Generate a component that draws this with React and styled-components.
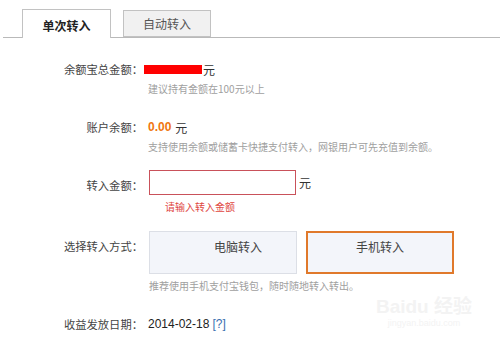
import React from 'react';
import styled, { createGlobalStyle } from 'styled-components';

const GlobalStyle = createGlobalStyle`
  html, body {
    margin: 0;
    padding: 0;
    background: #fff;
  }
  body {
    font-family: "Liberation Sans", "Noto Sans CJK SC", sans-serif;
    color: #333;
  }
`;

const Page = styled.div`
  position: relative;
  width: 500px;
  height: 341px;
  overflow: hidden;
  background: #fff;
`;

const TabBar = styled.div`
  display: flex;
  align-items: flex-end;
  height: 38px;
  margin-left: 3px;
  padding-left: 19px;
  border-bottom: 1px solid #b9b9b9;
  box-sizing: border-box;
`;

const Tab = styled.div`
  display: flex;
  align-items: center;
  justify-content: center;
  box-sizing: border-box;
  width: ${(p) => (p.$active ? '89px' : '88px')};
  height: ${(p) => (p.$active ? '29px' : '27px')};
  margin-left: ${(p) => (p.$active ? '0' : '12px')};
  margin-bottom: ${(p) => (p.$active ? '-1px' : '0')};
  border: 1px solid #c2c2c2;
  border-bottom: ${(p) => (p.$active ? 'none' : '1px solid #c2c2c2')};
  background: ${(p) => (p.$active ? '#fff' : '#f1f1f1')};
  color: ${(p) => (p.$active ? '#222' : '#555')};
  font-family: "Noto Sans CJK SC", sans-serif;
  font-size: 12px;
  font-weight: ${(p) => (p.$active ? 'bold' : 'normal')};
  padding-top: ${(p) => (p.$active ? '2px' : '0')};
`;

const Form = styled.div`
  display: flex;
  flex-direction: column;
  padding-top: 23px;
`;

const Row = styled.div`
  display: grid;
  grid-template-columns: 143px 1fr;
  column-gap: 5px;
  margin-top: ${(p) => p.$gap || 0}px;
`;

const Label = styled.div`
  text-align: right;
  font-family: "Noto Sans CJK SC", sans-serif;
  font-size: 11.3px;
  line-height: 16px;
  color: #444;
  padding-top: ${(p) => p.$offset || 0}px;
`;

const Field = styled.div`
  display: flex;
  flex-direction: column;
  gap: 5px;
`;

const Line = styled.div`
  display: flex;
  align-items: center;
  height: ${(p) => p.$h || 16}px;
  font-family: "Noto Sans CJK SC", sans-serif;
  font-size: 12px;
  color: #333;
`;

const Redacted = styled.span`
  display: inline-block;
  width: 58px;
  height: 9px;
  margin-left: -4px;
  margin-right: 1px;
  background: #f00;
`;

const Amount = styled.span`
  font-family: "Liberation Sans", sans-serif;
  font-weight: bold;
  font-size: 12px;
  color: #f0760e;
  margin-right: 4px;
`;

const Hint = styled.div`
  font-family: "Noto Sans CJK SC", sans-serif;
  font-size: 10px;
  line-height: 14px;
  color: ${(p) => (p.$error ? '#e0463f' : '#a0a0a0')};
  padding-left: ${(p) => p.$indent || 0}px;
`;

const Input = styled.input`
  box-sizing: border-box;
  width: 147px;
  height: 25px;
  margin: 0 3px 0 1px;
  border: 1px solid #c9515a;
  outline: none;
  background: #fff;
`;

const Choices = styled.div`
  display: flex;
  gap: 9px;
  margin-left: 1px;
`;

const Choice = styled.div`
  box-sizing: border-box;
  width: 148px;
  height: 43px;
  padding: 7px 0 0 ${(p) => p.$pad}px;
  background: #f3f5fa;
  border: ${(p) => (p.$selected ? '2px solid #e0792b' : '1px solid #dcdfe6')};
  font-family: "Noto Sans CJK SC", sans-serif;
  font-size: 12px;
  line-height: ${(p) => (p.$selected ? '14px' : '16px')};
  color: #444;
`;

const DateText = styled.span`
  font-family: "Liberation Sans", sans-serif;
  font-size: 12px;
  color: #222;
`;

const Help = styled.span`
  margin-left: 3px;
  font-family: "Liberation Sans", sans-serif;
  font-size: 12px;
  color: #3a6fb0;
`;

const Watermark = styled.div`
  position: absolute;
  right: 28px;
  bottom: 12px;
  display: flex;
  flex-direction: column;
  align-items: center;
  color: #f3f3f3;
  font-family: "Liberation Sans", "Noto Sans CJK SC", sans-serif;
  pointer-events: none;

  .brand {
    font-size: 19px;
    font-weight: bold;
    line-height: 20px;
  }
  .site {
    font-size: 9px;
    line-height: 12px;
  }
`;

const App = () => (
  <Page>
    <GlobalStyle />
    <TabBar>
      <Tab $active>单次转入</Tab>
      <Tab>自动转入</Tab>
    </TabBar>

    <Form>
      <Row>
        <Label>余额宝总金额：</Label>
        <Field>
          <Line>
            <Redacted />元
          </Line>
          <Hint>建议持有金额在100元以上</Hint>
        </Field>
      </Row>

      <Row $gap={23}>
        <Label>账户余额：</Label>
        <Field>
          <Line>
            <Amount>0.00</Amount>元
          </Line>
          <Hint>支持使用余额或储蓄卡快捷支付转入，网银用户可先充值到余额。</Hint>
        </Field>
      </Row>

      <Row $gap={16}>
        <Label $offset={7}>转入金额：</Label>
        <Field>
          <Line $h={25}>
            <Input type="text" />元
          </Line>
          <Hint $error $indent={17}>请输入转入金额</Hint>
        </Field>
      </Row>

      <Row $gap={17}>
        <Label $offset={7}>选择转入方式：</Label>
        <Field>
          <Choices>
            <Choice $pad={64}>电脑转入</Choice>
            <Choice $pad={48} $selected>手机转入</Choice>
          </Choices>
          <Hint $indent={1}>推荐使用手机支付宝钱包，随时随地转入转出。</Hint>
        </Field>
      </Row>

      <Row $gap={23}>
        <Label>收益发放日期：</Label>
        <Line>
          <DateText>2014-02-18</DateText>
          <Help>[?]</Help>
        </Line>
      </Row>
    </Form>

    <Watermark>
      <span className="brand">Baidu 经验</span>
      <span className="site">jingyan.baidu.com</span>
    </Watermark>
  </Page>
);

export default App;
